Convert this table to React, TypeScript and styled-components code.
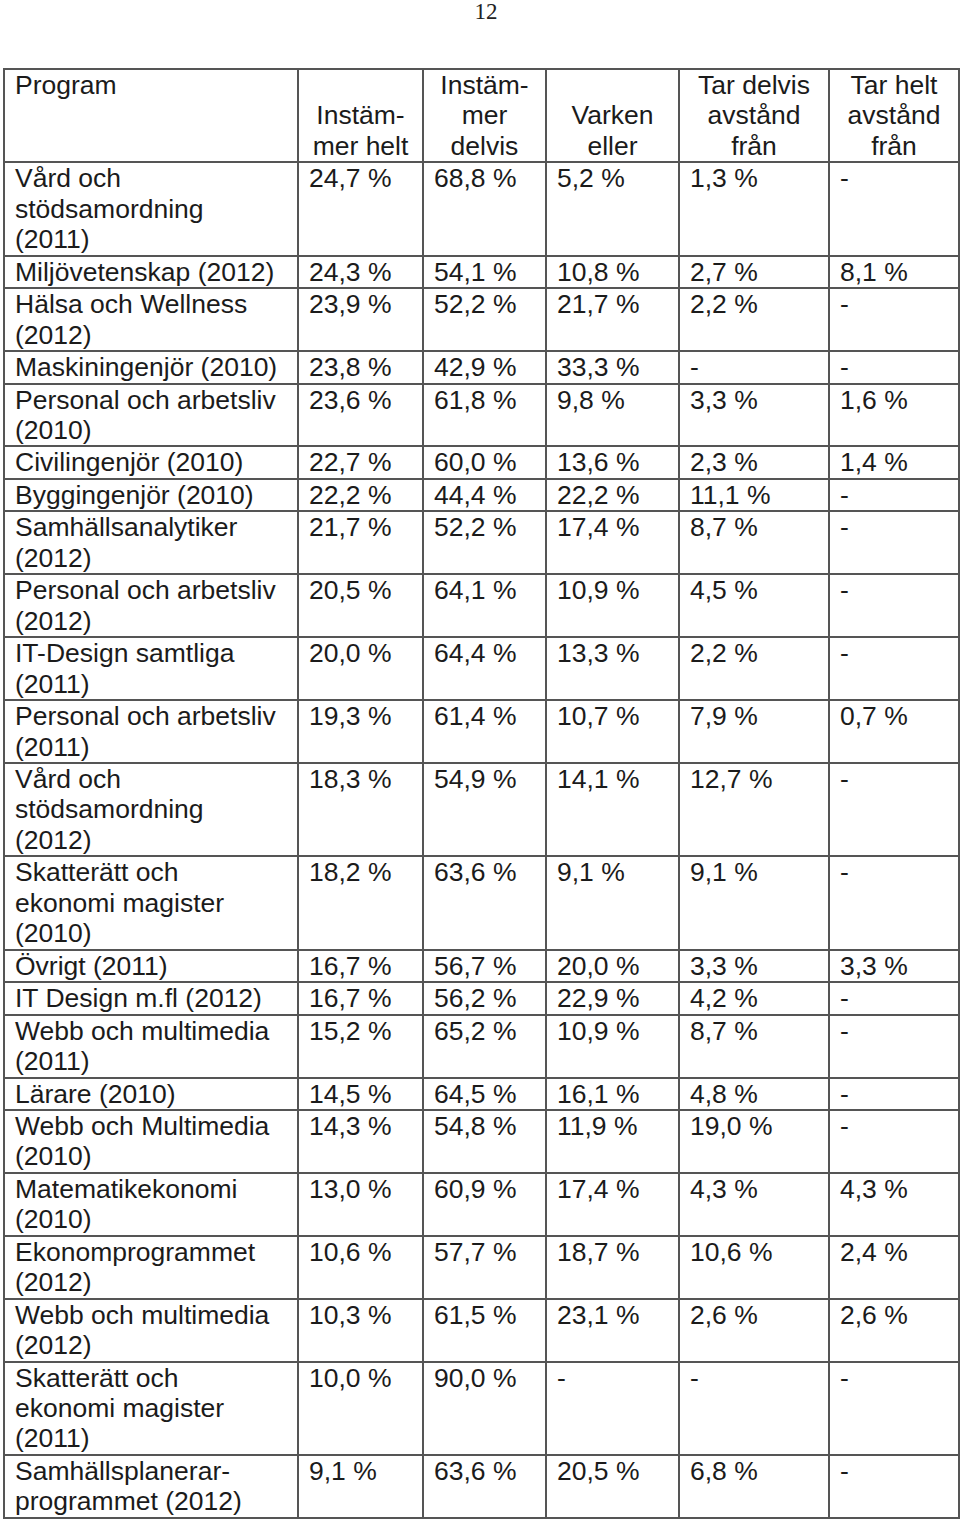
import React from 'react';
import styled, { createGlobalStyle } from 'styled-components';

const GlobalStyle = createGlobalStyle`
  html, body {
    margin: 0;
    padding: 0;
    background: #ffffff;
  }
  body {
    font-family: 'Liberation Sans', Arial, sans-serif;
    color: #1b1b1b;
  }
`;

const Page = styled.div`
  width: 960px;
  padding-bottom: 8px;
`;

const PageNumber = styled.div`
  font-family: 'Liberation Serif', 'Times New Roman', serif;
  font-size: 23px;
  line-height: 23px;
  text-align: center;
  padding-left: 12px;
  color: #222;
`;

const Table = styled.table`
  margin: 45px 0 0 3px;
  width: 955px;
  border-collapse: collapse;
  table-layout: fixed;
  font-size: 26.5px;
  line-height: 30.45px;
`;

const Cell = styled.td<{ $head?: boolean; $left?: boolean }>`
  border: 2px solid #555;
  padding: 0 2px 0 10px;
  white-space: nowrap;
  overflow: hidden;
  font-weight: normal;
  vertical-align: ${(p) => (p.$head && !p.$left ? 'bottom' : 'top')};
  text-align: ${(p) => (p.$head && !p.$left ? 'center' : 'left')};
  ${(p) => (p.$head && !p.$left ? 'padding: 0 1px;' : '')}
`;

type Row = { name: string[]; values: string[] };

const rows: Row[] = [
  { name: ['Vård och', 'stödsamordning', '(2011)'], values: ['24,7 %', '68,8 %', '5,2 %', '1,3 %', '-'] },
  { name: ['Miljövetenskap (2012)'], values: ['24,3 %', '54,1 %', '10,8 %', '2,7 %', '8,1 %'] },
  { name: ['Hälsa och Wellness', '(2012)'], values: ['23,9 %', '52,2 %', '21,7 %', '2,2 %', '-'] },
  { name: ['Maskiningenjör (2010)'], values: ['23,8 %', '42,9 %', '33,3 %', '-', '-'] },
  { name: ['Personal och arbetsliv', '(2010)'], values: ['23,6 %', '61,8 %', '9,8 %', '3,3 %', '1,6 %'] },
  { name: ['Civilingenjör (2010)'], values: ['22,7 %', '60,0 %', '13,6 %', '2,3 %', '1,4 %'] },
  { name: ['Byggingenjör (2010)'], values: ['22,2 %', '44,4 %', '22,2 %', '11,1 %', '-'] },
  { name: ['Samhällsanalytiker', '(2012)'], values: ['21,7 %', '52,2 %', '17,4 %', '8,7 %', '-'] },
  { name: ['Personal och arbetsliv', '(2012)'], values: ['20,5 %', '64,1 %', '10,9 %', '4,5 %', '-'] },
  { name: ['IT-Design samtliga', '(2011)'], values: ['20,0 %', '64,4 %', '13,3 %', '2,2 %', '-'] },
  { name: ['Personal och arbetsliv', '(2011)'], values: ['19,3 %', '61,4 %', '10,7 %', '7,9 %', '0,7 %'] },
  { name: ['Vård och', 'stödsamordning', '(2012)'], values: ['18,3 %', '54,9 %', '14,1 %', '12,7 %', '-'] },
  { name: ['Skatterätt och', 'ekonomi magister', '(2010)'], values: ['18,2 %', '63,6 %', '9,1 %', '9,1 %', '-'] },
  { name: ['Övrigt (2011)'], values: ['16,7 %', '56,7 %', '20,0 %', '3,3 %', '3,3 %'] },
  { name: ['IT Design m.fl (2012)'], values: ['16,7 %', '56,2 %', '22,9 %', '4,2 %', '-'] },
  { name: ['Webb och multimedia', '(2011)'], values: ['15,2 %', '65,2 %', '10,9 %', '8,7 %', '-'] },
  { name: ['Lärare (2010)'], values: ['14,5 %', '64,5 %', '16,1 %', '4,8 %', '-'] },
  { name: ['Webb och Multimedia', '(2010)'], values: ['14,3 %', '54,8 %', '11,9 %', '19,0 %', '-'] },
  { name: ['Matematikekonomi', '(2010)'], values: ['13,0 %', '60,9 %', '17,4 %', '4,3 %', '4,3 %'] },
  { name: ['Ekonomprogrammet', '(2012)'], values: ['10,6 %', '57,7 %', '18,7 %', '10,6 %', '2,4 %'] },
  { name: ['Webb och multimedia', '(2012)'], values: ['10,3 %', '61,5 %', '23,1 %', '2,6 %', '2,6 %'] },
  { name: ['Skatterätt och', 'ekonomi magister', '(2011)'], values: ['10,0 %', '90,0 %', '-', '-', '-'] },
  { name: ['Samhällsplanerar-', 'programmet (2012)'], values: ['9,1 %', '63,6 %', '20,5 %', '6,8 %', '-'] },
];

const headers: string[][] = [
  ['Instäm-', 'mer helt'],
  ['Instäm-', 'mer', 'delvis'],
  ['Varken', 'eller'],
  ['Tar delvis', 'avstånd', 'från'],
  ['Tar helt', 'avstånd', 'från'],
];

const widths = [294, 125, 123, 133, 150, 130];

const Lines: React.FC<{ lines: string[] }> = ({ lines }) => (
  <>
    {lines.map((l, i) => (
      <React.Fragment key={i}>
        {i > 0 && <br />}
        {l}
      </React.Fragment>
    ))}
  </>
);

const App: React.FC = () => {
  return (
    <Page>
      <GlobalStyle />
      <PageNumber>12</PageNumber>
      <Table>
        <colgroup>
          {widths.map((w, i) => (
            <col key={i} style={{ width: w }} />
          ))}
        </colgroup>
        <thead>
          <tr>
            <Cell as="th" $head $left>
              Program
            </Cell>
            {headers.map((h, i) => (
              <Cell as="th" key={i} $head>
                <Lines lines={h} />
              </Cell>
            ))}
          </tr>
        </thead>
        <tbody>
          {rows.map((r, i) => (
            <tr key={i}>
              <Cell $left>
                <Lines lines={r.name} />
              </Cell>
              {r.values.map((v, j) => (
                <Cell key={j}>{v}</Cell>
              ))}
            </tr>
          ))}
        </tbody>
      </Table>
    </Page>
  );
};

export default App;
